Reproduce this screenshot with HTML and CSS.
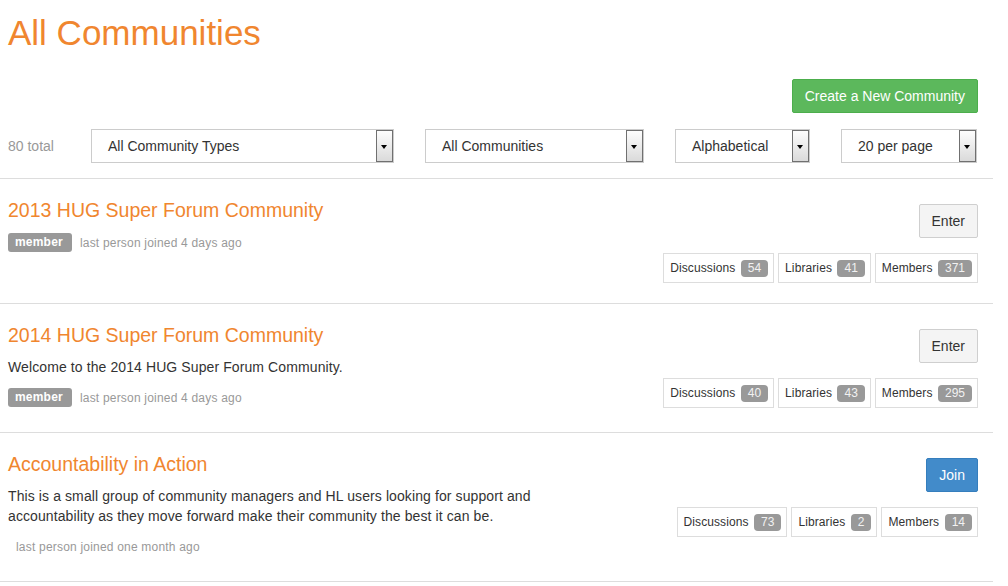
FILE: index.html
```html
<!DOCTYPE html>
<html>
<head>
<meta charset="utf-8">
<title>All Communities</title>
<link rel="stylesheet" href="styles.css">
</head>
<body>
<div class="page">
  <div class="head">
    <h1 class="title">All Communities</h1>
    <div class="actions"><a class="btn btn-green">Create a New Community</a></div>
    <div class="filters">
      <span class="total">80 total</span>
      <div class="select w1"><span class="sel-text">All Community Types</span><span class="sel-arrow"></span></div>
      <div class="select w2"><span class="sel-text">All Communities</span><span class="sel-arrow"></span></div>
      <div class="select w3"><span class="sel-text">Alphabetical</span><span class="sel-arrow"></span></div>
      <div class="select w4"><span class="sel-text">20 per page</span><span class="sel-arrow"></span></div>
    </div>
  </div>

  <div class="row">
    <div class="left">
      <h4 class="ctitle">2013 HUG Super Forum Community</h4>
      <div class="meta"><span class="label">member</span><span class="joined">last person joined 4 days ago</span></div>
    </div>
    <div class="right">
      <a class="btn btn-default">Enter</a>
      <div class="stats">
        <span class="stat">Discussions <span class="badge">54</span></span>
        <span class="stat">Libraries <span class="badge">41</span></span>
        <span class="stat">Members <span class="badge">371</span></span>
      </div>
    </div>
  </div>

  <div class="row">
    <div class="left">
      <h4 class="ctitle">2014 HUG Super Forum Community</h4>
      <p class="desc">Welcome to the 2014 HUG Super Forum Community.</p>
      <div class="meta"><span class="label">member</span><span class="joined">last person joined 4 days ago</span></div>
    </div>
    <div class="right">
      <a class="btn btn-default">Enter</a>
      <div class="stats">
        <span class="stat">Discussions <span class="badge">40</span></span>
        <span class="stat">Libraries <span class="badge">43</span></span>
        <span class="stat">Members <span class="badge">295</span></span>
      </div>
    </div>
  </div>

  <div class="row">
    <div class="left">
      <h4 class="ctitle">Accountability in Action</h4>
      <p class="desc">This is a small group of community managers and HL users looking for support and accountability as they move forward make their community the best it can be.</p>
      <div class="meta"><span class="joined">last person joined one month ago</span></div>
    </div>
    <div class="right">
      <a class="btn btn-blue">Join</a>
      <div class="stats">
        <span class="stat">Discussions <span class="badge">73</span></span>
        <span class="stat">Libraries <span class="badge">2</span></span>
        <span class="stat">Members <span class="badge">14</span></span>
      </div>
    </div>
  </div>
</div>
</body>
</html>
```

FILE: styles.css
```css
* { box-sizing: border-box; }
html, body { margin: 0; padding: 0; background: #fff; }
body {
  font-family: "Liberation Sans", Arial, sans-serif;
  font-size: 14px;
  line-height: 20px;
  color: #333;
}
.page { width: 993px; }
.head {
  padding: 0 15px 15px 8px;
  border-bottom: 1px solid #ddd;
}
.title {
  margin: 13px 0 0;
  font-size: 35px;
  line-height: 40px;
  font-weight: normal;
  color: #f0862f;
}
.actions {
  display: flex;
  justify-content: flex-end;
  margin-top: 26px;
}
.btn {
  display: inline-block;
  height: 34px;
  line-height: 32px;
  padding: 0 12px;
  font-size: 14px;
  border: 1px solid transparent;
  border-radius: 2px;
  cursor: pointer;
  white-space: nowrap;
}
.btn-green { background: #5cb85c; border-color: #4cae4c; color: #fff; }
.btn-default { background: #f4f4f4; border-color: #cfcfcf; color: #333; }
.btn-blue { background: #428bca; border-color: #357ebd; color: #fff; }

.filters {
  display: flex;
  align-items: center;
  margin-top: 16px;
  height: 34px;
}
.total { width: 83px; color: #999; font-size: 14px; }
.select {
  display: flex;
  align-items: center;
  justify-content: space-between;
  height: 34px;
  border: 1px solid #ccc;
  background: #fff;
  padding-left: 16px;
  margin-right: 31px;
}
.select:last-child { margin-right: 0; }
.w1 { width: 303px; }
.w2 { width: 219px; }
.w3 { width: 135px; }
.w4 { width: 136px; }
.sel-text { color: #333; font-size: 14px; }
.sel-arrow {
  position: relative;
  width: 17px;
  height: 32px;
  border: 1px solid #707070;
  background: linear-gradient(#fdfdfd, #dadada);
}
.sel-arrow::after {
  content: "";
  position: absolute;
  left: 4px;
  top: 14px;
  border-left: 3.5px solid transparent;
  border-right: 3.5px solid transparent;
  border-top: 4px solid #000;
}

.row {
  display: flex;
  justify-content: space-between;
  align-items: flex-start;
  padding: 20px 15px 20px 8px;
  border-bottom: 1px solid #ddd;
}
.left { padding-bottom: 5px; }
.ctitle {
  margin: 0;
  font-size: 19.5px;
  line-height: 22px;
  font-weight: normal;
  color: #f0862f;
}
.desc {
  margin: 11px 0 0;
  width: 545px;
  font-size: 14px;
  line-height: 20px;
  letter-spacing: 0.1px;
  color: #333;
}
.meta {
  display: flex;
  align-items: center;
  margin-top: 12px;
  height: 19px;
}
.desc + .meta { margin-top: 11px; }
.label {
  display: inline-block;
  height: 19px;
  line-height: 19px;
  padding: 0 9px 0 7px;
  background: #999;
  color: #fff;
  font-size: 12px;
  font-weight: bold;
  letter-spacing: 0.2px;
  border-radius: 3px;
}
.joined {
  margin-left: 8px;
  font-size: 12px;
  letter-spacing: 0.2px;
  color: #999;
}
.right {
  display: flex;
  flex-direction: column;
  align-items: flex-end;
  padding-top: 5px;
}
.stats {
  display: flex;
  gap: 4px;
  margin-top: 15px;
}
.stat {
  display: inline-flex;
  align-items: center;
  height: 30px;
  padding: 0 5px 0 6px;
  border: 1px solid #ddd;
  background: #fff;
  font-size: 12px;
  letter-spacing: 0.1px;
  color: #333;
  white-space: pre;
}
.badge {
  display: inline-block;
  height: 17px;
  line-height: 17px;
  padding: 0 7px;
  margin-left: 2px;
  background: #999;
  color: #f2f2f2;
  font-size: 12px;
  letter-spacing: 0;
  border-radius: 4px;
}
```
